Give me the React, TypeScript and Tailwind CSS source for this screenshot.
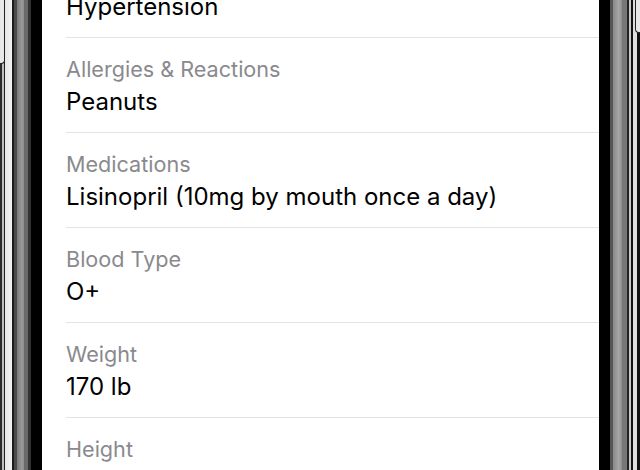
import React from "react";

const rows = [
  { label: "Conditions", value: "Hypertension" },
  { label: "Allergies & Reactions", value: "Peanuts" },
  { label: "Medications", value: "Lisinopril (10mg by mouth once a day)" },
  { label: "Blood Type", value: "O+" },
  { label: "Weight", value: "170 lb" },
  { label: "Height", value: "5′ 10″" },
];

export default function App() {
  return (
    <div className="relative flex h-[470px] w-[640px] overflow-hidden bg-black" style={{ fontFamily: "Inter, 'Noto Sans', sans-serif" }}>
      {/* left bezel */}
      <div className="h-full w-[42px] shrink-0 bg-[linear-gradient(to_right,#2a2a2a_0px,#2a2a2a_2px,#bdbdbd_2px,#bdbdbd_4px,#222_4px,#222_5px,#e6e6e6_5px,#f2f2f2_12px,#1a1a1a_12px,#1a1a1a_14px,#4a4a4a_14px,#4a4a4a_17px,#7a7a7a_17px,#9c9c9c_22px,#8a8a8a_24px,#6a6a6a_24px,#6a6a6a_28px,#333_28px,#333_31px,#000_31px,#000_42px)]" />
      {/* screen */}
      <div className="h-full flex-1 overflow-hidden bg-white">
        <div className="-mt-[57px] pl-[24px]">
          {rows.map((r, i) => (
            <div key={i} className="border-b border-[#e3e3e5] pb-[12px] pt-[16px]">
              <div className="text-[21.6px] leading-[30px] text-[#8a8a8e]">{r.label}</div>
              <div className={`text-[24px] leading-[36px] ${i === rows.length - 1 ? "text-[#ececec]" : "text-black"}`}>{r.value}</div>
            </div>
          ))}
        </div>
      </div>
      {/* right bezel */}
      <div className="h-full w-[41px] shrink-0 bg-[linear-gradient(to_right,#000_0px,#000_11px,#555_11px,#555_14px,#888_14px,#a8a8a8_20px,#8a8a8a_23px,#777_23px,#777_28px,#222_28px,#222_30px,#c8c8c8_30px,#c8c8c8_32px,#111_32px,#111_34px,#dedede_34px,#dedede_38px,#111_38px,#111_41px)]" />
      {/* side buttons */}
      <div className="absolute left-0 top-0 h-[64px] w-[5px] rounded-br-[4px] border-b border-r border-[#222] bg-[#e8e8e8]" />
      <div className="absolute right-0 top-0 h-[33px] w-[5px] rounded-bl-[4px] border-b border-l border-[#222] bg-[#e8e8e8]" />
    </div>
  );
}
